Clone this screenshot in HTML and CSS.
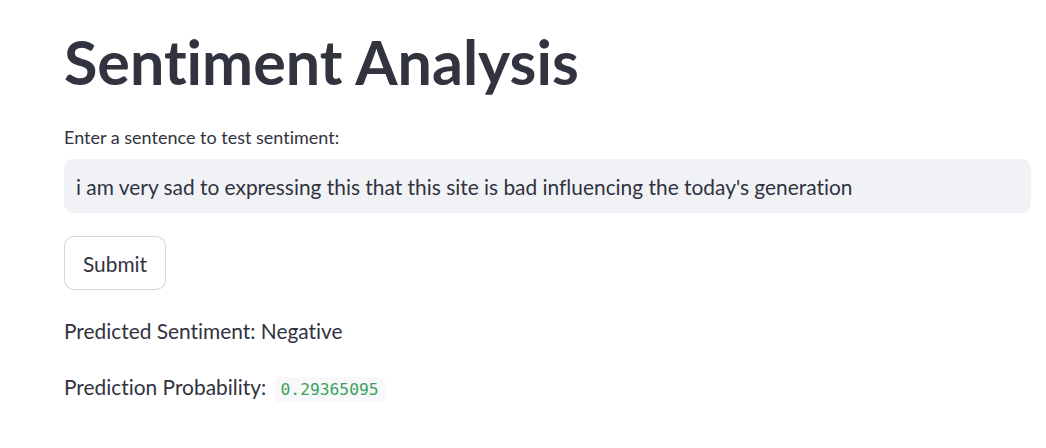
FILE: index.html
```html
<!DOCTYPE html>
<html>
<head>
<meta charset="utf-8">
<link rel="stylesheet" href="styles.css">
</head>
<body>
<main class="main">
  <h1 class="title">Sentiment Analysis</h1>
  <label class="label">Enter a sentence to test sentiment:</label>
  <div class="input">i am very sad to expressing this that this site is bad influencing the today's generation</div>
  <div class="btn-row"><button class="btn">Submit</button></div>
  <p class="text">Predicted Sentiment: Negative</p>
  <p class="text">Prediction Probability: <code class="code">0.29365095</code></p>
</main>
</body>
</html>
```
FILE: styles.css
```css
html, body { margin: 0; padding: 0; background: #ffffff; }
body { font-family: "Lato", "Noto Sans", sans-serif; color: #31333f; font-variant-ligatures: none; }
.main { display: flex; flex-direction: column; padding: 0 15px 0 64px; }
.title { font-size: 61px; font-weight: 700; margin: 24px 0 0; line-height: 76px; }
.label { font-size: 18px; margin-top: 25px; line-height: 24px; }
.input { margin-top: 10px; height: 54px; box-sizing: border-box; background: #f0f2f6; border-radius: 9px; padding: 0 12px; display: flex; align-items: center; font-size: 20.9px; }
.btn-row { margin-top: 23px; }
.btn { font-family: inherit; font-variant-ligatures: none; height: 54px; width: 102px; background: #fff; color: #31333f; border: 1px solid rgba(49,51,63,0.2); border-radius: 10px; font-size: 20.9px; padding: 0; }
.text { margin: 24px 0 0; font-size: 20.9px; line-height: 34px; }
.text + .text { margin-top: 22px; }
.code { font-family: "DejaVu Sans Mono", monospace; font-size: 16.3px; color: #3aa35e; background: #f8f8fa; padding: 3px 6px; border-radius: 4px; margin-left: 3px; }
```
